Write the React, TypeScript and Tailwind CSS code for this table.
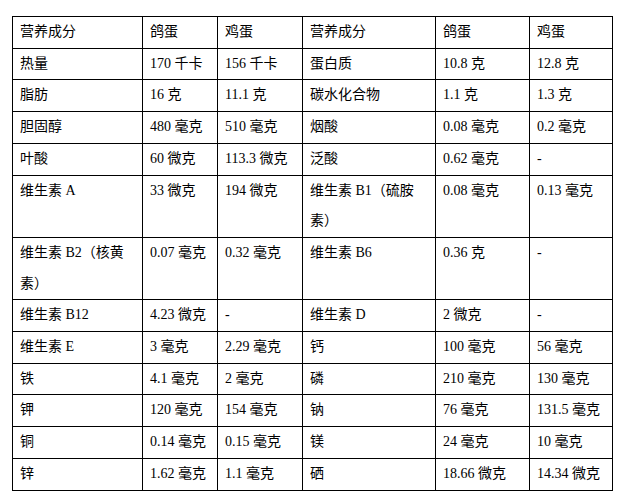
import React from "react";

type Row = { cells: React.ReactNode[] };

const rows: React.ReactNode[][] = [
  ["营养成分", "鸽蛋", "鸡蛋", "营养成分", "鸽蛋", "鸡蛋"],
  ["热量", "170 千卡", "156 千卡", "蛋白质", "10.8 克", "12.8 克"],
  ["脂肪", "16 克", "11.1 克", "碳水化合物", "1.1 克", "1.3 克"],
  ["胆固醇", "480 毫克", "510 毫克", "烟酸", "0.08 毫克", "0.2 毫克"],
  ["叶酸", "60 微克", "113.3 微克", "泛酸", "0.62 毫克", "-"],
  [
    "维生素 A",
    "33 微克",
    "194 微克",
    <>
      维生素 B1（硫胺
      <br />
      素）
    </>,
    "0.08 毫克",
    "0.13 毫克",
  ],
  [
    <>
      维生素 B2（核黄
      <br />
      素）
    </>,
    "0.07 毫克",
    "0.32 毫克",
    "维生素 B6",
    "0.36 克",
    "-",
  ],
  ["维生素 B12", "4.23 微克", "-", "维生素 D", "2 微克", "-"],
  ["维生素 E", "3 毫克", "2.29 毫克", "钙", "100 毫克", "56 毫克"],
  ["铁", "4.1 毫克", "2 毫克", "磷", "210 毫克", "130 毫克"],
  ["钾", "120 毫克", "154 毫克", "钠", "76 毫克", "131.5 毫克"],
  ["铜", "0.14 毫克", "0.15 毫克", "镁", "24 毫克", "10 毫克"],
  ["锌", "1.62 毫克", "1.1 毫克", "硒", "18.66 微克", "14.34 微克"],
];

export default function App() {
  return (
    <div className="w-[626px] h-[504px] bg-white pl-[12px] pt-[16px]">
      <table
        className="table-fixed border-collapse w-[600px] text-[14px] text-black"
        style={{ fontFamily: '"Liberation Serif", "Noto Sans CJK SC", serif' }}
      >
        <colgroup>
          <col className="w-[130px]" />
          <col className="w-[75px]" />
          <col className="w-[85px]" />
          <col className="w-[133px]" />
          <col className="w-[94px]" />
          <col className="w-[83px]" />
        </colgroup>
        <tbody>
          {rows.map((r, i) => (
            <tr key={i}>
              {r.map((c, j) => (
                <td
                  key={j}
                  className="border border-black px-[7px] py-0 align-top leading-[30.7px] whitespace-nowrap"
                >
                  {c}
                </td>
              ))}
            </tr>
          ))}
        </tbody>
      </table>
    </div>
  );
}
